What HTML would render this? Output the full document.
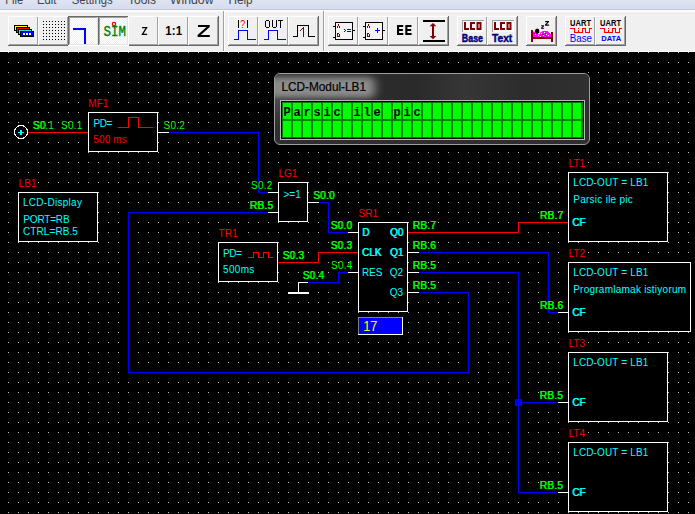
<!DOCTYPE html>
<html><head><meta charset="utf-8"><title>Parsic</title>
<style>
html,body{margin:0;padding:0;background:#000;overflow:hidden}
svg{display:block}
.r{fill:#ff0000}.g{fill:#00ff00}.c{fill:#00ffff}
.ce{shape-rendering:crispEdges}
</style></head><body>
<svg width="695" height="514" viewBox="0 0 695 514" font-family='"Liberation Sans", sans-serif' font-size="10">
<defs>
<pattern id="grid" x="8" y="52" width="10" height="10" patternUnits="userSpaceOnUse"><rect x="0" y="0" width="1" height="1" fill="#c4c4c4"/></pattern>
<pattern id="chk" x="0" y="0" width="2" height="2" patternUnits="userSpaceOnUse"><rect width="2" height="2" fill="#f0f0f0"/><rect x="0" y="0" width="1" height="1" fill="#fff"/><rect x="1" y="1" width="1" height="1" fill="#fff"/></pattern>
<linearGradient id="menug" x1="0" y1="0" x2="0" y2="1"><stop offset="0" stop-color="#dfe4f3"/><stop offset="1" stop-color="#d5dbed"/></linearGradient>
<linearGradient id="ttl" x1="0" y1="0" x2="1" y2="0"><stop offset="0" stop-color="#303030"/><stop offset="0.45" stop-color="#2a2a2a"/><stop offset="0.6" stop-color="#363636"/><stop offset="0.8" stop-color="#2c2c2c"/><stop offset="1" stop-color="#303030"/></linearGradient>
<linearGradient id="sideg" x1="0" y1="0" x2="0" y2="1"><stop offset="0" stop-color="#4c4c4c"/><stop offset="1" stop-color="#2f2f2f"/></linearGradient>
<filter id="blur5" x="-20%" y="-100%" width="140%" height="300%"><feGaussianBlur stdDeviation="5 3"/></filter>
<linearGradient id="ttv" x1="0" y1="0" x2="0" y2="1"><stop offset="0" stop-color="#000" stop-opacity="0.25"/><stop offset="0.35" stop-color="#000" stop-opacity="0"/><stop offset="1" stop-color="#000" stop-opacity="0.3"/></linearGradient>
</defs>
<rect x="0" y="52" width="695" height="462" fill="#000"/>
<rect class="ce" x="0" y="52" width="695" height="462" fill="url(#grid)"/>
<rect class="ce" x="28" y="132" width="60" height="1" fill="#ff0000"/>
<rect class="ce" x="158" y="132" width="11" height="1" fill="#ffffff"/>
<rect class="ce" x="169" y="132" width="90" height="1" fill="#0000ff"/>
<rect class="ce" x="258" y="132" width="1" height="61" fill="#0000ff"/>
<rect class="ce" x="258" y="192" width="10" height="1" fill="#0000ff"/>
<rect class="ce" x="268" y="192" width="10" height="1" fill="#ffffff"/>
<rect class="ce" x="128" y="212" width="140" height="1" fill="#0000ff"/>
<rect class="ce" x="268" y="212" width="10" height="1" fill="#ffffff"/>
<rect class="ce" x="128" y="212" width="1" height="161" fill="#0000ff"/>
<rect class="ce" x="128" y="372" width="341" height="1" fill="#0000ff"/>
<rect class="ce" x="468" y="292" width="1" height="81" fill="#0000ff"/>
<rect class="ce" x="419" y="292" width="50" height="1" fill="#0000ff"/>
<rect class="ce" x="408" y="292" width="11" height="1" fill="#ffffff"/>
<rect class="ce" x="308" y="202" width="11" height="1" fill="#ffffff"/>
<rect class="ce" x="319" y="202" width="10" height="1" fill="#0000ff"/>
<rect class="ce" x="328" y="202" width="1" height="31" fill="#0000ff"/>
<rect class="ce" x="328" y="232" width="20" height="1" fill="#0000ff"/>
<rect class="ce" x="348" y="232" width="10" height="1" fill="#ffffff"/>
<rect class="ce" x="278" y="262" width="41" height="1" fill="#ff0000"/>
<rect class="ce" x="318" y="252" width="1" height="11" fill="#ff0000"/>
<rect class="ce" x="318" y="252" width="40" height="1" fill="#ff0000"/>
<rect class="ce" x="298" y="282" width="1" height="11" fill="#ffffff"/>
<rect class="ce" x="288" y="292" width="21" height="2" fill="#ffffff"/>
<rect class="ce" x="298" y="282" width="10" height="1" fill="#ffffff"/>
<rect class="ce" x="308" y="282" width="31" height="1" fill="#0000ff"/>
<rect class="ce" x="338" y="272" width="1" height="11" fill="#0000ff"/>
<rect class="ce" x="338" y="272" width="10" height="1" fill="#0000ff"/>
<rect class="ce" x="348" y="272" width="10" height="1" fill="#ffffff"/>
<rect class="ce" x="408" y="232" width="111" height="1" fill="#ff0000"/>
<rect class="ce" x="518" y="222" width="1" height="11" fill="#ff0000"/>
<rect class="ce" x="518" y="222" width="50" height="1" fill="#ff0000"/>
<rect class="ce" x="408" y="252" width="11" height="1" fill="#ffffff"/>
<rect class="ce" x="419" y="252" width="130" height="1" fill="#0000ff"/>
<rect class="ce" x="548" y="252" width="1" height="61" fill="#0000ff"/>
<rect class="ce" x="548" y="312" width="10" height="1" fill="#0000ff"/>
<rect class="ce" x="558" y="312" width="10" height="1" fill="#ffffff"/>
<rect class="ce" x="408" y="272" width="11" height="1" fill="#ffffff"/>
<rect class="ce" x="419" y="272" width="100" height="1" fill="#0000ff"/>
<rect class="ce" x="518" y="272" width="1" height="221" fill="#0000ff"/>
<rect class="ce" x="518" y="402" width="40" height="1" fill="#0000ff"/>
<rect class="ce" x="558" y="402" width="10" height="1" fill="#ffffff"/>
<rect class="ce" x="518" y="492" width="40" height="1" fill="#0000ff"/>
<rect class="ce" x="558" y="492" width="10" height="1" fill="#ffffff"/>
<rect class="ce" x="515" y="399" width="7" height="7" fill="#0000ff"/>
<rect class="ce" x="88" y="112" width="70" height="40" fill="#fff"/>
<rect class="ce" x="89" y="113" width="68" height="38" fill="#000"/>
<rect class="ce" x="18" y="192" width="80" height="50" fill="#fff"/>
<rect class="ce" x="19" y="193" width="78" height="48" fill="#000"/>
<rect class="ce" x="278" y="182" width="30" height="40" fill="#fff"/>
<rect class="ce" x="279" y="183" width="28" height="38" fill="#000"/>
<rect class="ce" x="218" y="242" width="60" height="40" fill="#fff"/>
<rect class="ce" x="219" y="243" width="58" height="38" fill="#000"/>
<rect class="ce" x="358" y="222" width="50" height="90" fill="#fff"/>
<rect class="ce" x="359" y="223" width="48" height="88" fill="#000"/>
<rect class="ce" x="568" y="172" width="100" height="70" fill="#fff"/>
<rect class="ce" x="569" y="173" width="98" height="68" fill="#000"/>
<rect class="ce" x="568" y="262" width="123" height="70" fill="#fff"/>
<rect class="ce" x="569" y="263" width="121" height="68" fill="#000"/>
<rect class="ce" x="568" y="352" width="100" height="70" fill="#fff"/>
<rect class="ce" x="569" y="353" width="98" height="68" fill="#000"/>
<rect class="ce" x="568" y="442" width="100" height="70" fill="#fff"/>
<rect class="ce" x="569" y="443" width="98" height="68" fill="#000"/>
<circle class="ce" cx="21" cy="132" r="6.5" fill="#000" stroke="#fff" stroke-width="1"/>
<rect class="ce" x="18" y="132" width="6" height="1" fill="#00ffff"/><rect class="ce" x="20" y="130" width="2" height="5" fill="#00ffff"/>
<rect class="ce" x="118" y="127" width="11" height="1" fill="#ff0000"/>
<rect class="ce" x="128" y="117" width="1" height="11" fill="#ff0000"/>
<rect class="ce" x="128" y="117" width="11" height="1" fill="#ff0000"/>
<rect class="ce" x="138" y="117" width="1" height="11" fill="#ff0000"/>
<rect class="ce" x="138" y="127" width="15" height="1" fill="#ff0000"/>
<rect class="ce" x="248" y="257" width="6" height="1" fill="#ff0000"/>
<rect class="ce" x="253" y="252" width="1" height="6" fill="#ff0000"/>
<rect class="ce" x="253" y="252" width="6" height="1" fill="#ff0000"/>
<rect class="ce" x="258" y="252" width="1" height="6" fill="#ff0000"/>
<rect class="ce" x="258" y="257" width="6" height="1" fill="#ff0000"/>
<rect class="ce" x="263" y="252" width="1" height="6" fill="#ff0000"/>
<rect class="ce" x="263" y="252" width="6" height="1" fill="#ff0000"/>
<rect class="ce" x="268" y="252" width="1" height="6" fill="#ff0000"/>
<rect class="ce" x="268" y="257" width="5" height="1" fill="#ff0000"/>
<rect class="ce" x="358" y="317" width="45" height="18" fill="#fff"/>
<rect class="ce" x="358" y="317" width="44" height="17" fill="#808080"/>
<rect class="ce" x="359" y="318" width="43" height="16" fill="#0000ff"/>
<text x="363.2" y="331" class="y" style="font-size:14.3px" textLength="14.2" lengthAdjust="spacingAndGlyphs" fill="#ffff00">17</text>
<rect class="ce" x="88" y="97" width="22" height="13" fill="#000"/>
<text x="88.2" y="107" class="r">MF1</text>
<rect class="ce" x="18" y="177" width="20" height="13" fill="#000"/>
<text x="18.6" y="187" class="r">LB1</text>
<rect class="ce" x="278" y="167" width="21" height="13" fill="#000"/>
<text x="278.5" y="177" class="r">LG1</text>
<rect class="ce" x="218" y="227" width="21" height="13" fill="#000"/>
<text x="218.6" y="237" class="r">TR1</text>
<rect class="ce" x="358" y="207" width="21" height="13" fill="#000"/>
<text x="358.6" y="217" class="r">SR1</text>
<rect class="ce" x="568" y="157" width="19" height="13" fill="#000"/>
<text x="568.6" y="167" class="r">LT1</text>
<rect class="ce" x="568" y="247" width="19" height="13" fill="#000"/>
<text x="568.6" y="257" class="r">LT2</text>
<rect class="ce" x="568" y="337" width="19" height="13" fill="#000"/>
<text x="568.6" y="347" class="r">LT3</text>
<rect class="ce" x="568" y="427" width="19" height="13" fill="#000"/>
<text x="568.6" y="437" class="r">LT4</text>
<text x="32.6" y="128.5" class="g" letter-spacing="0.25">S0.1</text>
<text x="33.6" y="128.5" class="g" letter-spacing="0.25">S0</text>
<text x="61.1" y="128.5" class="g" letter-spacing="0.25">S0.1</text>
<text x="163.6" y="128.5" class="g" letter-spacing="0.25">S0.2</text>
<text x="251.1" y="188.5" class="g" letter-spacing="0.25">S0.2</text>
<text x="249.6" y="208.5" class="g" letter-spacing="0.3">RB.5</text>
<text x="250.4" y="208.5" class="g" letter-spacing="0.3">RB.5</text>
<text x="312.9" y="198.5" class="g" letter-spacing="0.3">S0.0</text>
<text x="313.7" y="198.5" class="g" letter-spacing="0.3">S0.0</text>
<text x="330.4" y="228.8" class="g" letter-spacing="0.3">S0.0</text>
<text x="331.2" y="228.8" class="g" letter-spacing="0.3">S0.0</text>
<text x="282.4" y="258.8" class="g" letter-spacing="0.3">S0.3</text>
<text x="283.2" y="258.8" class="g" letter-spacing="0.3">S0.3</text>
<text x="330.4" y="248.8" class="g" letter-spacing="0.3">S0.3</text>
<text x="331.2" y="248.8" class="g" letter-spacing="0.3">S0.3</text>
<text x="331.1" y="268.6" class="g" letter-spacing="0.25">S0.4</text>
<text x="302.4" y="278.8" class="g" letter-spacing="0.3">S0.4</text>
<text x="303.2" y="278.8" class="g" letter-spacing="0.3">S0.4</text>
<text x="412.4" y="228.8" class="g" letter-spacing="0.3">RB.7</text>
<text x="413.2" y="228.8" class="g" letter-spacing="0.3">RB.7</text>
<text x="412.4" y="248.8" class="g" letter-spacing="0.3">RB.6</text>
<text x="413.2" y="248.8" class="g" letter-spacing="0.3">RB.6</text>
<text x="412.4" y="268.8" class="g" letter-spacing="0.3">RB.5</text>
<text x="413.2" y="268.8" class="g" letter-spacing="0.3">RB.5</text>
<text x="412.4" y="288.8" class="g" letter-spacing="0.3">RB.5</text>
<text x="413.2" y="288.8" class="g" letter-spacing="0.3">RB.5</text>
<text x="539.7" y="219" class="g" letter-spacing="0.3">RB.7</text>
<text x="540.5" y="219" class="g" letter-spacing="0.3">RB.7</text>
<text x="539.7" y="308.8" class="g" letter-spacing="0.3">RB.6</text>
<text x="540.5" y="308.8" class="g" letter-spacing="0.3">RB.6</text>
<text x="539.4" y="398.6" class="g" letter-spacing="0.3">RB.5</text>
<text x="540.2" y="398.6" class="g" letter-spacing="0.3">RB.5</text>
<text x="539.4" y="488.6" class="g" letter-spacing="0.3">RB.5</text>
<text x="540.2" y="488.6" class="g" letter-spacing="0.3">RB.5</text>
<text x="93.5" y="126.8" class="c" letter-spacing="-0.45">PD=</text>
<text x="93.3" y="142.5" class="r" letter-spacing="0.15">500 ms</text>
<text x="22.9" y="205.6" class="c" letter-spacing="0.29">LCD-Display</text>
<text x="23.3" y="222.6" class="c" letter-spacing="-0.18">PORT=RB</text>
<text x="23" y="234.6" class="c" letter-spacing="0.09">CTRL=RB.5</text>
<text x="283.5" y="197.6" class="c">&gt;=1</text>
<text x="223.1" y="256.6" class="c" letter-spacing="-0.45">PD=</text>
<text x="223.1" y="272.6" class="c" letter-spacing="0.3">500ms</text>
<text x="361.9" y="235.6" class="c">D</text>
<text x="362.7" y="235.6" class="c">D</text>
<text x="361.7" y="255.6" class="c">CLK</text>
<text x="362.5" y="255.6" class="c">CLK</text>
<text x="361.9" y="275.6" class="c">RES</text>
<text x="389.8" y="235.6" class="c">Q0</text>
<text x="390.6" y="235.6" class="c">Q0</text>
<text x="389.8" y="255.6" class="c">Q1</text>
<text x="390.6" y="255.6" class="c">Q1</text>
<text x="389.8" y="275.6" class="c">Q2</text>
<text x="389.8" y="295.6" class="c">Q3</text>
<text x="573.2" y="186" class="c" letter-spacing="0.14">LCD-OUT = LB1</text>
<text x="571.9" y="225.8" class="c">CF</text>
<text x="572.7" y="225.8" class="c">CF</text>
<text x="573.2" y="276" class="c" letter-spacing="0.14">LCD-OUT = LB1</text>
<text x="571.9" y="315.8" class="c">CF</text>
<text x="572.7" y="315.8" class="c">CF</text>
<text x="573.2" y="366" class="c" letter-spacing="0.14">LCD-OUT = LB1</text>
<text x="571.9" y="405.8" class="c">CF</text>
<text x="572.7" y="405.8" class="c">CF</text>
<text x="573.2" y="456" class="c" letter-spacing="0.14">LCD-OUT = LB1</text>
<text x="571.9" y="495.8" class="c">CF</text>
<text x="572.7" y="495.8" class="c">CF</text>
<text x="573.2" y="202.8" class="c" letter-spacing="0.27">Parsic ile pic</text>
<text x="573.2" y="292.8" class="c" letter-spacing="0.243">Programlamak istiyorum</text>
<g id="lcdwin">
<rect x="273" y="72" width="318" height="74" rx="7" ry="7" fill="#000"/>
<clipPath id="wclip"><rect x="275" y="74" width="314" height="70" rx="5" ry="5"/></clipPath>
<rect x="274.5" y="73.5" width="315" height="71" rx="5.5" ry="5.5" fill="#2f2f2f" stroke="#9e9e9e" stroke-width="1"/>
<g clip-path="url(#wclip)">
<rect x="275" y="74" width="314" height="26" fill="url(#ttl)"/>
<rect x="266" y="77" width="109" height="21" rx="6" fill="#8c8c8c" filter="url(#blur5)"/>
<rect x="275" y="100" width="5" height="26" fill="url(#sideg)"/>
</g>
<rect class="ce" x="280" y="100" width="305" height="40" fill="#b8b8b8"/>
<rect class="ce" x="281" y="101" width="303" height="38" fill="#000"/>
<rect class="ce" x="282" y="102" width="301" height="36" fill="#008000"/>
<rect class="ce" x="283" y="103" width="8" height="16" fill="#00ff00"/><rect class="ce" x="283" y="121" width="8" height="16" fill="#00ff00"/>
<rect class="ce" x="293" y="103" width="8" height="16" fill="#00ff00"/><rect class="ce" x="293" y="121" width="8" height="16" fill="#00ff00"/>
<rect class="ce" x="303" y="103" width="8" height="16" fill="#00ff00"/><rect class="ce" x="303" y="121" width="8" height="16" fill="#00ff00"/>
<rect class="ce" x="313" y="103" width="8" height="16" fill="#00ff00"/><rect class="ce" x="313" y="121" width="8" height="16" fill="#00ff00"/>
<rect class="ce" x="323" y="103" width="8" height="16" fill="#00ff00"/><rect class="ce" x="323" y="121" width="8" height="16" fill="#00ff00"/>
<rect class="ce" x="333" y="103" width="8" height="16" fill="#00ff00"/><rect class="ce" x="333" y="121" width="8" height="16" fill="#00ff00"/>
<rect class="ce" x="343" y="103" width="8" height="16" fill="#00ff00"/><rect class="ce" x="343" y="121" width="8" height="16" fill="#00ff00"/>
<rect class="ce" x="353" y="103" width="8" height="16" fill="#00ff00"/><rect class="ce" x="353" y="121" width="8" height="16" fill="#00ff00"/>
<rect class="ce" x="363" y="103" width="8" height="16" fill="#00ff00"/><rect class="ce" x="363" y="121" width="8" height="16" fill="#00ff00"/>
<rect class="ce" x="373" y="103" width="8" height="16" fill="#00ff00"/><rect class="ce" x="373" y="121" width="8" height="16" fill="#00ff00"/>
<rect class="ce" x="383" y="103" width="8" height="16" fill="#00ff00"/><rect class="ce" x="383" y="121" width="8" height="16" fill="#00ff00"/>
<rect class="ce" x="393" y="103" width="8" height="16" fill="#00ff00"/><rect class="ce" x="393" y="121" width="8" height="16" fill="#00ff00"/>
<rect class="ce" x="403" y="103" width="8" height="16" fill="#00ff00"/><rect class="ce" x="403" y="121" width="8" height="16" fill="#00ff00"/>
<rect class="ce" x="413" y="103" width="8" height="16" fill="#00ff00"/><rect class="ce" x="413" y="121" width="8" height="16" fill="#00ff00"/>
<rect class="ce" x="423" y="103" width="8" height="16" fill="#00ff00"/><rect class="ce" x="423" y="121" width="8" height="16" fill="#00ff00"/>
<rect class="ce" x="433" y="103" width="8" height="16" fill="#00ff00"/><rect class="ce" x="433" y="121" width="8" height="16" fill="#00ff00"/>
<rect class="ce" x="443" y="103" width="8" height="16" fill="#00ff00"/><rect class="ce" x="443" y="121" width="8" height="16" fill="#00ff00"/>
<rect class="ce" x="453" y="103" width="8" height="16" fill="#00ff00"/><rect class="ce" x="453" y="121" width="8" height="16" fill="#00ff00"/>
<rect class="ce" x="463" y="103" width="8" height="16" fill="#00ff00"/><rect class="ce" x="463" y="121" width="8" height="16" fill="#00ff00"/>
<rect class="ce" x="473" y="103" width="8" height="16" fill="#00ff00"/><rect class="ce" x="473" y="121" width="8" height="16" fill="#00ff00"/>
<rect class="ce" x="483" y="103" width="8" height="16" fill="#00ff00"/><rect class="ce" x="483" y="121" width="8" height="16" fill="#00ff00"/>
<rect class="ce" x="493" y="103" width="8" height="16" fill="#00ff00"/><rect class="ce" x="493" y="121" width="8" height="16" fill="#00ff00"/>
<rect class="ce" x="503" y="103" width="8" height="16" fill="#00ff00"/><rect class="ce" x="503" y="121" width="8" height="16" fill="#00ff00"/>
<rect class="ce" x="513" y="103" width="8" height="16" fill="#00ff00"/><rect class="ce" x="513" y="121" width="8" height="16" fill="#00ff00"/>
<rect class="ce" x="523" y="103" width="8" height="16" fill="#00ff00"/><rect class="ce" x="523" y="121" width="8" height="16" fill="#00ff00"/>
<rect class="ce" x="533" y="103" width="8" height="16" fill="#00ff00"/><rect class="ce" x="533" y="121" width="8" height="16" fill="#00ff00"/>
<rect class="ce" x="543" y="103" width="8" height="16" fill="#00ff00"/><rect class="ce" x="543" y="121" width="8" height="16" fill="#00ff00"/>
<rect class="ce" x="553" y="103" width="8" height="16" fill="#00ff00"/><rect class="ce" x="553" y="121" width="8" height="16" fill="#00ff00"/>
<rect class="ce" x="563" y="103" width="8" height="16" fill="#00ff00"/><rect class="ce" x="563" y="121" width="8" height="16" fill="#00ff00"/>
<rect class="ce" x="573" y="103" width="8" height="16" fill="#00ff00"/><rect class="ce" x="573" y="121" width="8" height="16" fill="#00ff00"/>
<text x="287" y="116" text-anchor="middle" style="font-family:'Liberation Mono', monospace;font-weight:bold;font-size:12px" fill="#000">P</text>
<text x="297" y="116" text-anchor="middle" style="font-family:'Liberation Mono', monospace;font-weight:bold;font-size:12px" fill="#000">a</text>
<text x="307" y="116" text-anchor="middle" style="font-family:'Liberation Mono', monospace;font-weight:bold;font-size:12px" fill="#000">r</text>
<text x="317" y="116" text-anchor="middle" style="font-family:'Liberation Mono', monospace;font-weight:bold;font-size:12px" fill="#000">s</text>
<text x="327" y="116" text-anchor="middle" style="font-family:'Liberation Mono', monospace;font-weight:bold;font-size:12px" fill="#000">i</text>
<text x="337" y="116" text-anchor="middle" style="font-family:'Liberation Mono', monospace;font-weight:bold;font-size:12px" fill="#000">c</text>
<text x="357" y="116" text-anchor="middle" style="font-family:'Liberation Mono', monospace;font-weight:bold;font-size:12px" fill="#000">i</text>
<text x="367" y="116" text-anchor="middle" style="font-family:'Liberation Mono', monospace;font-weight:bold;font-size:12px" fill="#000">l</text>
<text x="377" y="116" text-anchor="middle" style="font-family:'Liberation Mono', monospace;font-weight:bold;font-size:12px" fill="#000">e</text>
<text x="397" y="116" text-anchor="middle" style="font-family:'Liberation Mono', monospace;font-weight:bold;font-size:12px" fill="#000">p</text>
<text x="407" y="116" text-anchor="middle" style="font-family:'Liberation Mono', monospace;font-weight:bold;font-size:12px" fill="#000">i</text>
<text x="417" y="116" text-anchor="middle" style="font-family:'Liberation Mono', monospace;font-weight:bold;font-size:12px" fill="#000">c</text>
<text x="281.5" y="91" font-size="12" fill="#000" stroke="#000" stroke-width="0.2" textLength="84.5" lengthAdjust="spacingAndGlyphs">LCD-Modul-LB1</text>
</g>
<rect x="0" y="0" width="695" height="52" fill="#f0f0f0"/>
<rect x="0" y="0" width="695" height="10" fill="url(#menug)"/>
<rect class="ce" x="0" y="9" width="695" height="1" fill="#bfc6da"/>
<rect class="ce" x="0" y="10" width="695" height="2" fill="#fdfdfd"/>
<rect class="ce" x="0" y="51" width="695" height="1" fill="#ffffff"/>
<text x="5.2" y="4.2" font-size="12" fill="#454545" textLength="18" lengthAdjust="spacingAndGlyphs">File</text>
<text x="37" y="4.2" font-size="12" fill="#454545" textLength="19.5" lengthAdjust="spacingAndGlyphs">Edit</text>
<text x="71.7" y="4.2" font-size="12" fill="#454545" textLength="41" lengthAdjust="spacingAndGlyphs">Settings</text>
<text x="128" y="4.2" font-size="12" fill="#454545" textLength="28" lengthAdjust="spacingAndGlyphs">Tools</text>
<text x="170" y="4.2" font-size="12" fill="#454545" textLength="43.5" lengthAdjust="spacingAndGlyphs">Window</text>
<text x="228.4" y="4.2" font-size="12" fill="#454545" textLength="24.2" lengthAdjust="spacingAndGlyphs">Help</text>
<rect class="ce" x="8" y="16" width="31" height="30" fill="#696969"/>
<rect class="ce" x="8" y="16" width="30" height="29" fill="#ffffff"/>
<rect class="ce" x="9" y="17" width="29" height="28" fill="#a0a0a0"/>
<rect class="ce" x="9" y="17" width="28" height="27" fill="#f0f0f0"/>
<rect class="ce" x="38" y="16" width="31" height="30" fill="#696969"/>
<rect class="ce" x="38" y="16" width="30" height="29" fill="#ffffff"/>
<rect class="ce" x="39" y="17" width="29" height="28" fill="#a0a0a0"/>
<rect class="ce" x="39" y="17" width="28" height="27" fill="#f0f0f0"/>
<rect class="ce" x="128" y="16" width="31" height="30" fill="#696969"/>
<rect class="ce" x="128" y="16" width="30" height="29" fill="#ffffff"/>
<rect class="ce" x="129" y="17" width="29" height="28" fill="#a0a0a0"/>
<rect class="ce" x="129" y="17" width="28" height="27" fill="#f0f0f0"/>
<rect class="ce" x="158" y="16" width="31" height="30" fill="#696969"/>
<rect class="ce" x="158" y="16" width="30" height="29" fill="#ffffff"/>
<rect class="ce" x="159" y="17" width="29" height="28" fill="#a0a0a0"/>
<rect class="ce" x="159" y="17" width="28" height="27" fill="#f0f0f0"/>
<rect class="ce" x="188" y="16" width="31" height="30" fill="#696969"/>
<rect class="ce" x="188" y="16" width="30" height="29" fill="#ffffff"/>
<rect class="ce" x="189" y="17" width="29" height="28" fill="#a0a0a0"/>
<rect class="ce" x="189" y="17" width="28" height="27" fill="#f0f0f0"/>
<rect class="ce" x="228" y="16" width="31" height="30" fill="#696969"/>
<rect class="ce" x="228" y="16" width="30" height="29" fill="#ffffff"/>
<rect class="ce" x="229" y="17" width="29" height="28" fill="#a0a0a0"/>
<rect class="ce" x="229" y="17" width="28" height="27" fill="#f0f0f0"/>
<rect class="ce" x="258" y="16" width="31" height="30" fill="#696969"/>
<rect class="ce" x="258" y="16" width="30" height="29" fill="#ffffff"/>
<rect class="ce" x="259" y="17" width="29" height="28" fill="#a0a0a0"/>
<rect class="ce" x="259" y="17" width="28" height="27" fill="#f0f0f0"/>
<rect class="ce" x="288" y="16" width="31" height="30" fill="#696969"/>
<rect class="ce" x="288" y="16" width="30" height="29" fill="#ffffff"/>
<rect class="ce" x="289" y="17" width="29" height="28" fill="#a0a0a0"/>
<rect class="ce" x="289" y="17" width="28" height="27" fill="#f0f0f0"/>
<rect class="ce" x="328" y="16" width="31" height="30" fill="#696969"/>
<rect class="ce" x="328" y="16" width="30" height="29" fill="#ffffff"/>
<rect class="ce" x="329" y="17" width="29" height="28" fill="#a0a0a0"/>
<rect class="ce" x="329" y="17" width="28" height="27" fill="#f0f0f0"/>
<rect class="ce" x="358" y="16" width="31" height="30" fill="#696969"/>
<rect class="ce" x="358" y="16" width="30" height="29" fill="#ffffff"/>
<rect class="ce" x="359" y="17" width="29" height="28" fill="#a0a0a0"/>
<rect class="ce" x="359" y="17" width="28" height="27" fill="#f0f0f0"/>
<rect class="ce" x="388" y="16" width="31" height="30" fill="#696969"/>
<rect class="ce" x="388" y="16" width="30" height="29" fill="#ffffff"/>
<rect class="ce" x="389" y="17" width="29" height="28" fill="#a0a0a0"/>
<rect class="ce" x="389" y="17" width="28" height="27" fill="#f0f0f0"/>
<rect class="ce" x="418" y="16" width="31" height="30" fill="#696969"/>
<rect class="ce" x="418" y="16" width="30" height="29" fill="#ffffff"/>
<rect class="ce" x="419" y="17" width="29" height="28" fill="#a0a0a0"/>
<rect class="ce" x="419" y="17" width="28" height="27" fill="#f0f0f0"/>
<rect class="ce" x="457" y="16" width="31" height="30" fill="#696969"/>
<rect class="ce" x="457" y="16" width="30" height="29" fill="#ffffff"/>
<rect class="ce" x="458" y="17" width="29" height="28" fill="#a0a0a0"/>
<rect class="ce" x="458" y="17" width="28" height="27" fill="#f0f0f0"/>
<rect class="ce" x="487" y="16" width="31" height="30" fill="#696969"/>
<rect class="ce" x="487" y="16" width="30" height="29" fill="#ffffff"/>
<rect class="ce" x="488" y="17" width="29" height="28" fill="#a0a0a0"/>
<rect class="ce" x="488" y="17" width="28" height="27" fill="#f0f0f0"/>
<rect class="ce" x="526" y="16" width="31" height="30" fill="#696969"/>
<rect class="ce" x="526" y="16" width="30" height="29" fill="#ffffff"/>
<rect class="ce" x="527" y="17" width="29" height="28" fill="#a0a0a0"/>
<rect class="ce" x="527" y="17" width="28" height="27" fill="#f0f0f0"/>
<rect class="ce" x="565" y="16" width="31" height="30" fill="#696969"/>
<rect class="ce" x="565" y="16" width="30" height="29" fill="#ffffff"/>
<rect class="ce" x="566" y="17" width="29" height="28" fill="#a0a0a0"/>
<rect class="ce" x="566" y="17" width="28" height="27" fill="#f0f0f0"/>
<rect class="ce" x="595" y="16" width="31" height="30" fill="#696969"/>
<rect class="ce" x="595" y="16" width="30" height="29" fill="#ffffff"/>
<rect class="ce" x="596" y="17" width="29" height="28" fill="#a0a0a0"/>
<rect class="ce" x="596" y="17" width="28" height="27" fill="#f0f0f0"/>
<rect class="ce" x="68" y="16" width="31" height="30" fill="#ffffff"/>
<rect class="ce" x="68" y="16" width="30" height="29" fill="#696969"/>
<rect class="ce" x="69" y="17" width="29" height="28" fill="#e3e3e3"/>
<rect class="ce" x="69" y="17" width="28" height="27" fill="#a0a0a0"/>
<rect class="ce" x="70" y="18" width="27" height="26" fill="url(#chk)"/>
<rect class="ce" x="98" y="16" width="31" height="30" fill="#ffffff"/>
<rect class="ce" x="98" y="16" width="30" height="29" fill="#696969"/>
<rect class="ce" x="99" y="17" width="29" height="28" fill="#e3e3e3"/>
<rect class="ce" x="99" y="17" width="28" height="27" fill="#a0a0a0"/>
<rect class="ce" x="100" y="18" width="27" height="26" fill="url(#chk)"/>
<rect class="ce" x="223" y="11" width="1" height="40" fill="#a0a0a0"/><rect class="ce" x="224" y="11" width="1" height="40" fill="#ffffff"/>
<rect class="ce" x="323" y="11" width="1" height="40" fill="#a0a0a0"/><rect class="ce" x="324" y="11" width="1" height="40" fill="#ffffff"/>
<rect class="ce" x="14" y="25" width="14" height="6" fill="#000"/><rect class="ce" x="15" y="26" width="12" height="4" fill="#ffff00"/>
<rect class="ce" x="16" y="27" width="14" height="6" fill="#000"/><rect class="ce" x="17" y="28" width="12" height="4" fill="#ff0000"/>
<rect class="ce" x="18" y="29" width="14" height="6" fill="#000"/><rect class="ce" x="19" y="30" width="12" height="4" fill="#00ffff"/>
<rect class="ce" x="20" y="31" width="14" height="6" fill="#000"/><rect class="ce" x="21" y="32" width="12" height="4" fill="#0000ff"/>
<rect class="ce" x="23" y="33" width="2" height="2" fill="#fff"/>
<rect class="ce" x="26" y="33" width="2" height="2" fill="#fff"/>
<rect class="ce" x="29" y="33" width="2" height="2" fill="#fff"/>
<path class="ce" d="M43,21h1v1h-1zM46,21h1v1h-1zM49,21h1v1h-1zM52,21h1v1h-1zM55,21h1v1h-1zM58,21h1v1h-1zM61,21h1v1h-1zM64,21h1v1h-1zM43,24h1v1h-1zM46,24h1v1h-1zM49,24h1v1h-1zM52,24h1v1h-1zM55,24h1v1h-1zM58,24h1v1h-1zM61,24h1v1h-1zM64,24h1v1h-1zM43,27h1v1h-1zM46,27h1v1h-1zM49,27h1v1h-1zM52,27h1v1h-1zM55,27h1v1h-1zM58,27h1v1h-1zM61,27h1v1h-1zM64,27h1v1h-1zM43,30h1v1h-1zM46,30h1v1h-1zM49,30h1v1h-1zM52,30h1v1h-1zM55,30h1v1h-1zM58,30h1v1h-1zM61,30h1v1h-1zM64,30h1v1h-1zM43,33h1v1h-1zM46,33h1v1h-1zM49,33h1v1h-1zM52,33h1v1h-1zM55,33h1v1h-1zM58,33h1v1h-1zM61,33h1v1h-1zM64,33h1v1h-1zM43,36h1v1h-1zM46,36h1v1h-1zM49,36h1v1h-1zM52,36h1v1h-1zM55,36h1v1h-1zM58,36h1v1h-1zM61,36h1v1h-1zM64,36h1v1h-1zM43,39h1v1h-1zM46,39h1v1h-1zM49,39h1v1h-1zM52,39h1v1h-1zM55,39h1v1h-1zM58,39h1v1h-1zM61,39h1v1h-1zM64,39h1v1h-1z" fill="#000"/>
<rect class="ce" x="73" y="28" width="13" height="2" fill="#0000ff"/><rect class="ce" x="84" y="28" width="2" height="16" fill="#0000ff"/>
<text x="103.6" y="36" font-family='"Liberation Mono", monospace' font-size="14" fill="#008000" stroke="#008000" stroke-width="0.35" textLength="22.3" lengthAdjust="spacingAndGlyphs">SIM</text>
<circle cx="114" cy="24" r="1.7" fill="#fff" stroke="#ff0000" stroke-width="1.2"/>
<path d="M142,27.5 H146.6 L142.4,34.4 H147.1" fill="none" stroke="#000" stroke-width="1.25" stroke-linejoin="miter"/>
<text x="165.3" y="34.8" font-weight="bold" font-size="12.5" fill="#000" textLength="16.8" lengthAdjust="spacingAndGlyphs">1:1</text>
<path d="M198,25 H209.7 V27 L200.8,35 H209.8 V37.1 H197.6 V35.1 L206.5,27.1 H198 Z" fill="#000"/>
<rect class="ce" x="238" y="20" width="1" height="8" fill="#000"/><rect class="ce" x="247" y="20" width="1" height="8" fill="#000"/>
<text x="240.2" y="28" font-size="11" fill="#ff0000" textLength="5" lengthAdjust="spacingAndGlyphs">?</text>
<path class="ce" d="M234,39.5 H238.5 V30.5 H247.5 V39.5 H256" fill="none" stroke="#0000ff"/>
<path class="ce" d="M266,20h3v1h-3z M266,27h3v1h-3z M265,21h1v6h-1z M269,21h1v6h-1z M272,20h1v7h-1z M276,20h1v7h-1z M273,27h3v1h-3z M278,20h5v1h-5z M280,21h1v7h-1z" fill="#000"/>
<path class="ce" d="M264,39.5 H268.5 V30.5 H277.5 V39.5 H286" fill="none" stroke="#0000ff"/>
<path class="ce" d="M293,36.5 H297.5 V25.5 H308.5 V36.5 H315" fill="none" stroke="#000"/>
<path class="ce" d="M303,27h1v10h-1z M302,28h1v1h-1z M301,29h1v1h-1z M300,30h1v1h-1z" fill="#800000"/>
<rect class="ce" x="335" y="22" width="18" height="18" fill="#000"/><rect class="ce" x="336" y="23" width="16" height="16" fill="#f4f4f4"/>
<rect class="ce" x="333" y="26" width="2" height="1" fill="#000"/><rect class="ce" x="333" y="37" width="2" height="1" fill="#000"/><rect class="ce" x="353" y="30" width="2" height="1" fill="#000"/>
<path class="ce" d="M338,24h1v2h-1z M337,26h1v2h-1z M339,26h1v2h-1z" fill="#800000"/>
<path class="ce" d="M337,33h2v1h-2z M337,33h1v4h-1z M337,36h3v1h-3z M339,34h1v3h-1z" fill="#800000"/>
<path class="ce" d="M344,29h1v1h-1z M345,30h1v1h-1z M344,31h1v1h-1z M347,29h4v1h-4z M347,31h4v1h-4z" fill="#0000ff"/>
<rect class="ce" x="365" y="22" width="18" height="18" fill="#000"/><rect class="ce" x="366" y="23" width="16" height="16" fill="#f4f4f4"/>
<rect class="ce" x="363" y="26" width="2" height="1" fill="#000"/><rect class="ce" x="363" y="37" width="2" height="1" fill="#000"/><rect class="ce" x="383" y="30" width="2" height="1" fill="#000"/>
<path class="ce" d="M368,24h1v2h-1z M367,26h1v2h-1z M369,26h1v2h-1z" fill="#800000"/>
<path class="ce" d="M367,33h2v1h-2z M367,33h1v4h-1z M367,36h3v1h-3z M369,34h1v3h-1z" fill="#800000"/>
<rect class="ce" x="375" y="30" width="5" height="1" fill="#0000ff"/><rect class="ce" x="377" y="28" width="1" height="5" fill="#0000ff"/>
<path d="M397,25 h6.2 v2 h-4.1 v2 h3.8 v2 h-3.8 v2 h4.2 v2 h-6.3 z" fill="#000"/>
<path d="M405.3,25 h6.2 v2 h-4.1 v2 h3.8 v2 h-3.8 v2 h4.2 v2 h-6.3 z" fill="#000"/>
<rect class="ce" x="423" y="20" width="22" height="2" fill="#000"/><rect class="ce" x="423" y="40" width="22" height="2" fill="#000"/>
<path d="M433,23 L436.4,26.2 H434 V36 H436.4 L433,39.2 L429.6,36 H432 V26.2 H429.6 Z" fill="#800000"/>
<rect class="ce" x="462" y="20" width="22" height="12" fill="#a0a0a0"/><rect class="ce" x="463" y="21" width="21" height="11" fill="#fbfbfb"/>
<path d="M464,22h2v8h-2zM464,28h5v2h-5zM470,22h2v8h-2zM470,22h5v2h-5zM470,28h5v2h-5zM476.5,22h2v8h-2zM479.5,22h2v8h-2zM476.5,22h5v2h-5zM476.5,28h5v2h-5z" fill="#800000"/>
<text x="461.8" y="41.8" font-weight="bold" font-size="11.7" fill="#000080" stroke="#000080" stroke-width="0.45" textLength="21.2" lengthAdjust="spacingAndGlyphs">Base</text>
<rect class="ce" x="492" y="20" width="22" height="12" fill="#a0a0a0"/><rect class="ce" x="493" y="21" width="21" height="11" fill="#fbfbfb"/>
<path d="M494,22h2v8h-2zM494,28h5v2h-5zM500,22h2v8h-2zM500,22h5v2h-5zM500,28h5v2h-5zM506.5,22h2v8h-2zM509.5,22h2v8h-2zM506.5,22h5v2h-5zM506.5,28h5v2h-5z" fill="#800000"/>
<text x="492" y="41.8" font-weight="bold" font-size="11.7" fill="#000080" stroke="#000080" stroke-width="0.45" textLength="20.2" lengthAdjust="spacingAndGlyphs">Text</text>
<rect class="ce" x="531" y="30" width="2" height="12" fill="#800000"/><rect class="ce" x="551" y="32" width="2" height="10" fill="#800000"/><rect class="ce" x="533" y="37" width="18" height="2" fill="#800000"/>
<path d="M533,31.5 L540,32.5 L543,31 H547.5 L551,34.5 V37 H533 Z" fill="#ff00ff"/>
<path class="ce" d="M535,34h1v1h-1z M538,35h1v1h-1z M541,33h1v1h-1z M544,32h1v1h-1z M546,34h1v1h-1z M543,35h1v1h-1z M548,35h1v1h-1z M540,36h1v1h-1z" fill="#ffffff"/>
<path class="ce" d="M534,33h1v1h-1z M542,34h2v1h-2z M545,33h1v1h-1z M545,35h1v1h-1z" fill="#800080"/>
<rect x="538" y="32.6" width="2.2" height="1.6" fill="#ffff00"/>
<ellipse cx="537.2" cy="31" rx="2.2" ry="2.5" fill="#000"/>
<path d="M541.2,25.3 H544 V26.2 L542.3,27.8 H544.1 V28.7 H541 V27.8 L542.8,26.2 H541.2 Z" fill="#000"/>
<path d="M545.2,21 H549 V22.1 L546.6,24.5 H549.1 V25.7 H545 V24.6 L547.4,22.2 H545.2 Z" fill="#000"/>
<text x="570" y="25.6" font-weight="bold" font-size="8.4" fill="#000" textLength="21" lengthAdjust="spacingAndGlyphs">UART</text>
<path class="ce" d="M570,28.5 H574.5 V32.5 H582.5 V28.5 H585.5 V32.5 H589.5 V28.5 H592" fill="none" stroke="#ff0000"/>
<rect class="ce" x="578" y="30" width="1" height="3" fill="#ff0000"/><rect class="ce" x="578" y="28" width="1" height="1" fill="#ff0000"/>
<text x="600" y="25.6" font-weight="bold" font-size="8.4" fill="#000" textLength="21" lengthAdjust="spacingAndGlyphs">UART</text>
<path class="ce" d="M600,28.5 H604.5 V32.5 H612.5 V28.5 H615.5 V32.5 H619.5 V28.5 H622" fill="none" stroke="#ff0000"/>
<rect class="ce" x="608" y="30" width="1" height="3" fill="#ff0000"/><rect class="ce" x="608" y="28" width="1" height="1" fill="#ff0000"/>
<text x="569.8" y="41.5" font-size="10.5" fill="#0000ff" textLength="22.2" lengthAdjust="spacingAndGlyphs">Base</text>
<text x="601.2" y="40.6" font-weight="bold" font-size="7.6" fill="#0000ff" textLength="20" lengthAdjust="spacingAndGlyphs">DATA</text>
</svg></body></html>
